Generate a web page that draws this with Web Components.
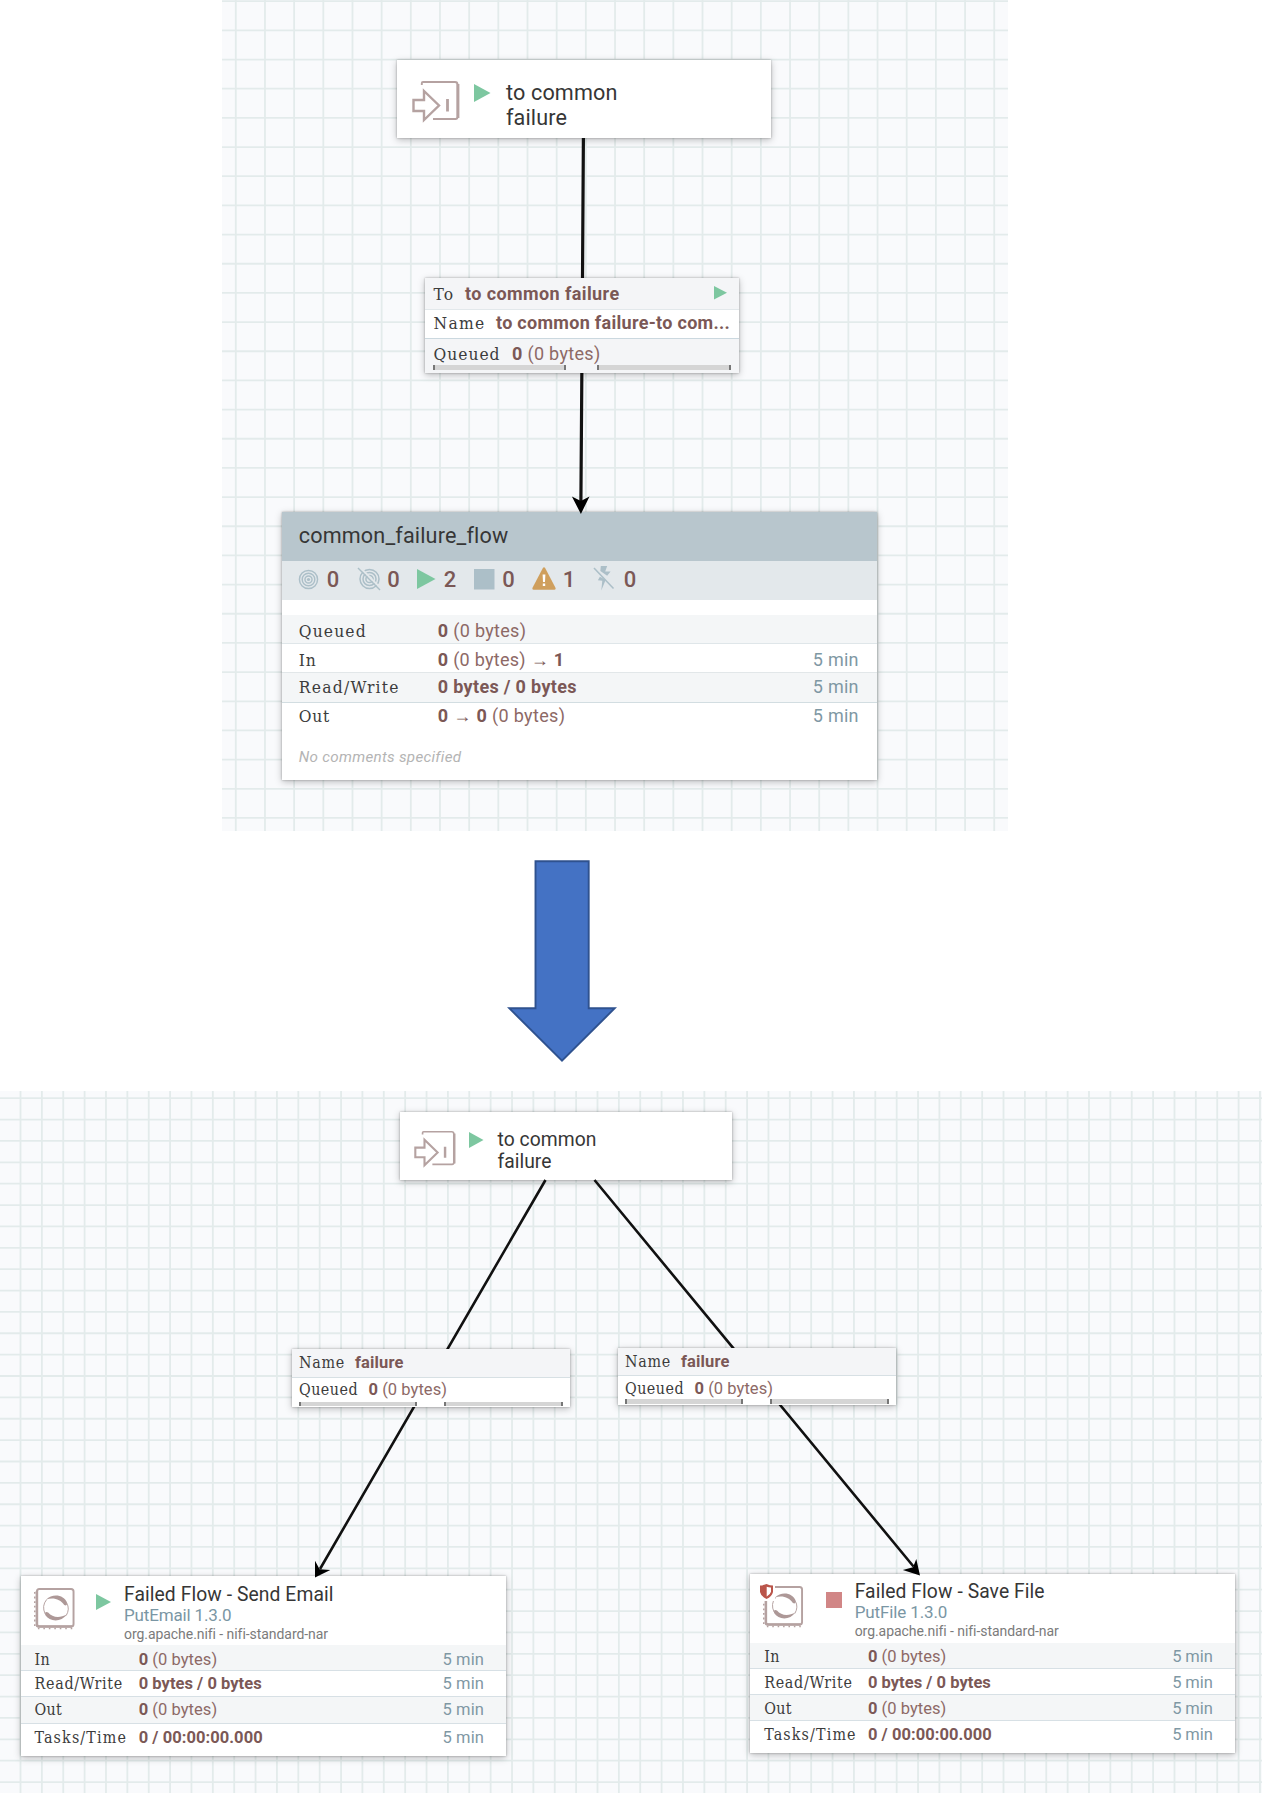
<!DOCTYPE html>
<html lang="en">
<head>
<meta charset="utf-8">
<title>NiFi flow</title>
<style>
html,body{margin:0;padding:0;background:#fff}
body{width:1262px;height:1793px;overflow:hidden;font-family:Roboto,sans-serif}
</style>
</head>
<body>
<flow-page></flow-page>
<script>
const define = (name, css, render) => customElements.define(name, class extends HTMLElement {
  connectedCallback() {
    if (this.shadowRoot) return;
    this.attachShadow({mode: 'open'}).innerHTML = `<style>${css}</style>${render(this)}`;
  }
});

/* Text run whose tracking is adjusted to fill the width given in "w". */
customElements.define('flow-text', class extends HTMLElement {
  connectedCallback() {
    if (this.shadowRoot) return;
    this.attachShadow({mode: 'open'}).innerHTML = '<style>:host{display:block;white-space:nowrap;line-height:1}span{display:inline-block}</style><span><slot></slot></span>';
    const w = +this.getAttribute('w');
    if (!w) return;
    const span = this.shadowRoot.querySelector('span');
    const natural = span.getBoundingClientRect().width;
    span.style.letterSpacing = (w - natural) / this.textContent.length + 'px';
  }
});

const PLAY = '<path d="M0 0L18 9.5L0 19Z" fill="#7dc7a0"/>';
const icons = {
  play: ['0 0 18 19', PLAY],
  stop: ['0 0 20 20', '<path d="M0 0H20V20H0Z" fill="#d18686"/>'],
  stopped: ['0 0 20 20', '<path d="M0 0H20V20H0Z" fill="#acbfc8"/>'],
  port: ['0 0 48 42', `<g fill="none" stroke="#b5a2a1">
    <path d="M9.8 5V3.200Q9.800 2 11 2H43Q45.500 2 45.500 4.500V37Q45.500 39 43.500 39H21" stroke-width="1.900"/>
    <path d="M46 4V38" stroke-width="2.800"/>
    <path d="M1.500 20H12V11L27 25.500L12 40V31H1.500Z" stroke-width="2.400"/>
    <path d="M35.500 19V31.500" stroke-width="2.800"/></g>`],
  processor: ['0 0 42 42', `<g fill="none" stroke="#b5a2a1">
    <rect x="3" y="2" width="37.500" height="37.500" rx="2.500" stroke-width="2"/>
    <path d="M3 4V37.500Q3 39.500 5 39.500H39" stroke-width="2.600"/>
    <path d="M.8 5V41" stroke-width="1.600" stroke-dasharray="1.800 2.800"/>
    <path d="M4 41.500H40" stroke-width="1.600" stroke-dasharray="1.600 4"/></g>
    <g fill="#ad9897"><path d="M12.500 12.500C19 6 31 7.500 34 16Q34 19.500 31 18C27 12 19.500 10 12.500 12.500Z"/>
    <path d="M33.500 27.500C28 35.500 16 35 11.500 28Q10.500 24 14.500 25.500C19 31 27 31 33.500 27.500Z"/></g>
    <path d="M13 12.500Q7.500 19 11.500 27M33.500 16Q37 22 33 28.500" fill="none" stroke="#b5a2a1" stroke-width="1"/>`],
  shield: ['0 0 13 15', '<path d="M0 1.500Q3 1.500 6.500 0Q10 1.500 13 1.500V8Q12 12.500 6.500 15Q1 12.500 0 8Z" fill="#ba554a"/><path d="M6.700 2.800Q9 3.500 11 3.400V7.800Q10.200 10.800 6.700 12.600Z" fill="#fff"/>'],
  target: ['0 0 22 22', '<g fill="none" stroke="#acbfc8" stroke-width="1.500"><circle cx="11" cy="11" r="9.500"/><circle cx="11" cy="11" r="6.600"/><circle cx="11" cy="11" r="3.700"/></g><circle cx="11" cy="11" r="1.700" fill="#acbfc8"/>'],
  targetOff: ['0 0 24 24', '<g fill="none" stroke="#acbfc8" stroke-width="1.500"><circle cx="12.500" cy="12" r="9.500"/><circle cx="12.500" cy="12" r="6.500"/><circle cx="12.500" cy="12" r="3.600"/></g><path d="M2.500 0L24 21.500" stroke="#e3e8eb" stroke-width="2"/><path d="M1 1L23 23" stroke="#acbfc8" stroke-width="1.500"/>'],
  warning: ['0 0 24 23', '<path d="M11 .8Q12 -.5 13 .8L23.600 21Q24 22.500 22.500 22.700H1.500Q0 22.500 .4 21Z" fill="#cf9f5d"/><path d="M10.600 7.500H13.400L13 15H11ZM10.800 16.500H13.200V19H10.800Z" fill="#fff"/>'],
  flashOff: ['0 0 22 25', '<g fill="#acbfc8"><path d="M8 0H14.500L12.500 5.500H18L14.500 10L7.500 5ZM7 11L13 14L8.500 25L9.500 15L5 14.500Z"/></g><path d="M1 2L21 23" stroke="#acbfc8" stroke-width="1.600"/>']
};
define('flow-icon', ':host{display:block;flex:none}svg{display:block;width:100%;height:100%;overflow:visible}', el => {
  const [box, art] = icons[el.getAttribute('name')];
  return `<svg viewBox="${box}" preserveAspectRatio="none">${art}</svg>`;
});
const icon = (name, w, h, x = 0, y = 0) => `<flow-icon name="${name}" style="width:${w}px;height:${h}px;margin:${y}px 0 0 ${x}px"></flow-icon>`;

/* A line of text cells sharing one baseline, set by --b from the row's top. */
define('flow-row', `:host{display:flex;align-items:baseline;box-sizing:border-box;height:var(--h)}
  :host::before{content:"";width:0;height:var(--b);flex:none}`, () => '<slot></slot>');
const row = (h, b, cells, style = '') => `<flow-row style="--h:${h}px;--b:${b}px;${style}">${cells}</flow-row>`;
const cell = (cls, gap, w, text, style = '') => `<flow-text class="${cls}" w="${w}" style="margin-left:${gap}px;${style}">${text}</flow-text>`;
const col = (cls, x, colW, w, text) => `<div style="width:${colW}px;padding-left:${x}px;flex:none">${cell(cls, 0, w, text)}</div>`;
const minutes = w => `<flow-text class="time end" w="${w}">5 min</flow-text>`;

const card = `:host{position:absolute;box-sizing:border-box;background:#fff;display:flex;flex-direction:column;
    box-shadow:0 0 2px rgba(0,0,0,.3),0 2px 7px rgba(0,0,0,.25)}
  .label{font-family:"Roboto Slab","DejaVu Serif Condensed","DejaVu Serif",serif;font-stretch:condensed;font-size:var(--label);color:#3c3c3c}
  .value{font-size:var(--text);color:#8d6966}
  .value b,.strong{font-weight:700;color:#7b5856}
  .strong{font-size:var(--text)}
  .time{font-size:var(--text);color:#7f98a4}
  .end{margin-left:auto;padding-right:var(--end)}
  .title{font-size:var(--title);color:#363636}`;

define('flow-port', card + ':host{flex-direction:row;align-items:flex-start}', el => {
  const big = el.hasAttribute('big');
  return big
    ? icon('port', 48, 42, 15, 20) + icon('play', 16.5, 18, 14, 24) +
      `<div style="margin-left:15.500px">${row(40, 40, cell('title', 0, 111.500, 'to common'))}${row(25, 25, cell('title', 0, 61, 'failure'))}</div>`
    : icon('port', 42, 37, 13.500, 18.500) + icon('play', 14.5, 16, 13.500, 20) +
      `<div style="margin-left:14px">${row(34.5, 34.5, cell('title', 0, 99, 'to common'))}${row(22, 22, cell('title', 0, 54, 'failure'))}</div>`;
});

define('flow-gauge', `:host{display:flex;justify-content:space-between}
  i{height:100%;box-sizing:border-box;border:solid #777;border-width:0 2px;background:#d5d5d5}`,
  el => `<i style="width:${el.getAttribute('left')}px"></i><i style="width:${el.getAttribute('right')}px"></i>`);

define('flow-connection', card, el => {
  const kind = el.getAttribute('kind');
  const gray = 'background:#f4f5f7;';
  if (kind === 'main') return row(32, 22, cell('label', 8.5, 21, 'To') + cell('strong', 10.500, 154.500, 'to common failure') + `<div class="end">${icon('play', 13, 13.500)}</div>`, gray + 'border-bottom:1.5px solid #e2e8eb;') +
    row(29, 19, cell('label', 8.5, 52, 'Name') + cell('strong', 10.500, 234, 'to common failure-to com...'), 'border-bottom:1.500px solid #cbd8df;') +
    row(26, 21, cell('label', 8.5, 67, 'Queued') + cell('value', 11.500, 88.500, '<b>0</b> (0 bytes)'), gray) +
    `<div style="${gray}height:8px"><flow-gauge left="133" right="134" style="height:5.500px;margin:0 8px"></flow-gauge></div>`;
  const second = kind === 'right';
  return row(second ? 27.5 : 28.5, 19, cell('label', 7.5, 46, 'Name') + cell('strong', 10, 48.500, 'failure'), gray + 'border-bottom:1.5px solid #d7e0e4;') +
    row(second ? 23.5 : 24, second ? 18.5 : 17, cell('label', 7.5, 59, 'Queued') + cell('value', 10.5, 78.500, '<b>0</b> (0 bytes)')) +
    `<flow-gauge left="118" right="119" style="height:4.500px;margin:0 7px"></flow-gauge>`;
});

define('flow-group', card + `.status{display:flex;align-items:flex-start;background:#e3e8eb;height:39px;box-sizing:border-box}
  .count{font-size:22px;font-weight:500;color:#7b5856}`, () => {
  const stat = (name, w, h, y, x, gap, tw, n) => icon(name, w, h, x, y) + row(39, 26.5, cell('count', gap, tw, n));
  const min = minutes(46);
  const gray = 'background:#f4f6f7;';
  return row(49, 31.5, cell('title', 16.5, 209, 'common_failure_flow'), 'background:#b8c6cd;') +
    `<div class="status">${stat('target', 21, 21, 8.500, 15.500, 8, 13, '0')}${stat('targetOff', 24, 24, 6, 17, 6.500, 13, '0')}${stat('play', 18.5, 20, 8.500, 17, 8, 13, '2')}${stat('stopped', 20.5, 20.5, 8, 17.5, 7.500, 13, '0')}${stat('warning', 24, 23, 6.500, 16.5, 7, 13, '1')}${stat('flashOff', 21.5, 24.5, 5.500, 17.500, 9, 13, '0')}</div>
    <div style="height:15px"></div>` +
    row(29, 22.5, col('label', 16.5, 139, 68, 'Queued') + cell('value', 0, 88.500, '<b>0</b> (0 bytes)'), gray + 'border-bottom:1.500px solid #dfe6e9;') +
    row(29.5, 22, col('label', 16.5, 139, 18, 'In') + cell('value', 0, 126.500, '<b>0</b> (0 bytes) <b>→ 1</b>') + min, 'border-bottom:1.5px solid #e2e7e9;') +
    row(29.5, 19.5, col('label', 16.5, 139, 101, 'Read/Write') + cell('strong', 0, 139, '0 bytes / 0 bytes') + min, gray + 'border-bottom:1.500px solid #d2dde1;') +
    row(39, 19.5, col('label', 16.5, 139, 31, 'Out') + cell('value', 0, 127.5, '<b>0 → 0</b> (0 bytes)') + min) +
    row(30, 20, cell('', 16.5, 162, 'No comments specified', 'font-size:15.200px;font-style:italic;color:#b4b4b4'));
});

define('flow-processor', card + `.head{display:flex;align-items:flex-start;flex:none}.type{font-size:17px;color:#7a96a4}.bundle{font-size:14px;color:#7b7b7b}
  .badge{position:relative}.badge .shield{position:absolute;left:10.500px;top:10px;padding:0 2px 2px 0;background:#fff}`, el => {
  const save = el.hasAttribute('save');
  const min = minutes(save ? 40.5 : 41.5);
  const rows = save ? [[26, 19.5], [26, 19.5], [26.5, 19.5], [32, 18.5]] : [[25.5, 19.5], [26, 18.5], [27.5, 18.5], [32, 18.5]];
  const x = save ? 14.5 : 14, c = 118.2;
  const data = [['In', 15.5, '<b>0</b> (0 bytes)', 78.5], ['Read/Write', 88.5, '<b>0 bytes / 0 bytes</b>', 123], ['Out', 27.5, '<b>0</b> (0 bytes)', 78.5], ['Tasks/Time', 92.5, '<b>0 / 00:00:00.000</b>', 124]];
  const mark = save
    ? `<div class="badge">${icon('processor', 40.5, 42, 13, 11.5)}<div class="shield">${icon('shield', 13, 15)}</div></div>` + icon('stop', 16, 16, 22.500, 18)
    : icon('processor', 41, 42, 13.500, 10.500) + icon('play', 15, 16, 21, 17.500);
  return `<div class="head" style="height:69px">${mark}<div style="margin-left:13px">` +
    row(25, 24.5, cell('title', 0, save ? 190 : 209.500, save ? 'Failed Flow - Save File' : 'Failed Flow - Send Email')) +
    row(20, 19.5, cell('type', 0, save ? 92.500 : 107.500, save ? 'PutFile 1.3.0' : 'PutEmail 1.3.0')) +
    row(20, 17.5, cell('bundle', 0, 203, 'org.apache.nifi - nifi-standard-nar')) + '</div></div>' +
    data.map((d, i) => row(...rows[i], col('label', x, c - x, d[1], d[0]) + cell('value', 0, d[3], d[2]) + min,
      (i % 2 ? '' : 'background:#f4f6f7;') + (i < 3 ? 'border-bottom:1.500px solid #d7e0e5;' : ''))).join('');
});

/* Canvas with a ruled background, free-placed nodes in the slot and edges between them. */
define('flow-canvas', `:host{display:block;position:relative;overflow:hidden;background:#f9fafc}
  svg{position:absolute;inset:0;width:100%;height:100%}`, el => {
  const [x0, y0, step, w, h] = el.getAttribute('grid').split(' ').map(Number);
  let d = '';
  for (let x = x0; x < w; x += step) d += `M${x.toFixed(2)} 0V${h}`;
  for (let y = y0; y < h; y += step) d += `M0 ${y.toFixed(2)}H${w}`;
  return `<svg><path d="${d}" stroke="#e3ebeb" stroke-width="1.800" fill="none"/></svg><slot></slot>`;
});
define('flow-edges', ':host{display:block;position:absolute;inset:0}svg{display:block;width:100%;height:100%}', el =>
  `<svg><path d="${el.getAttribute('lines')}" stroke="#111" stroke-width="${el.getAttribute('weight')}" fill="none"/><path d="${el.getAttribute('heads')}" fill="#000"/></svg>`);

define('down-arrow', ':host{display:block;width:110px;height:203px}svg{display:block}', () =>
  '<svg width="110" height="203"><path d="M28.500 1.200H81.700V148.200H107.800L55 200.700L2.200 148.200H28.500Z" fill="#4472c4" stroke="#2f528f" stroke-width="1.900"/></svg>');

define('flow-page', `:host{display:flex;flex-direction:column;width:1262px;height:1793px}
  .top{margin-left:222px;width:786px;height:831px;--title:21.600px;--text:18px;--label:17.300px;--end:11.500px}
  .mid{height:260px;padding:29px 0 0 507px;box-sizing:border-box}
  .bottom{width:1262px;height:702px;--title:19.300px;--text:16.500px;--label:15.900px;--end:22px}`, () => {
  const at = (x, y, w, h) => `left:${x}px;top:${y}px;width:${w}px;height:${h}px`;
  return `<flow-canvas class="top" grid="13.800 1.200 29.170 786 831">
    <flow-port big style="${at(175, 60, 374, 78)}"></flow-port>
    <flow-edges weight="3.200" lines="M361.400 138L360.200 325L358.900 502" heads="M349.900 496.500L358.900 501L367.500 496.500L358.900 514Z" style="z-index:1"></flow-edges>
    <flow-connection kind="main" style="${at(203, 277.5, 313.500, 95)};z-index:2"></flow-connection>
    <flow-group style="${at(60.3, 511.5, 595, 268.500)};--end:18.500px"></flow-group>
  </flow-canvas>
  <div class="mid"><down-arrow></down-arrow></div>
  <flow-canvas class="bottom" grid="20.500 7.200 21.370 1262 702">
    <flow-port style="${at(400, 20.500, 332, 68.500)}"></flow-port>
    <flow-connection kind="left" style="${at(291.5, 258, 278, 58)};z-index:2"></flow-connection>
    <flow-connection kind="right" style="${at(617.5, 257, 278, 57)};z-index:2"></flow-connection>
    <flow-processor style="${at(20.5, 485, 485.500, 180)}"></flow-processor>
    <flow-processor save style="${at(749.7, 482.500, 485, 179.500)}"></flow-processor>
    <flow-edges weight="2.600" lines="M545.500 89L320 478M594.500 89L913.500 475.500" heads="M315 486.500L315 469.800L319.600 478.300L330.300 479ZM920 484.500L902.800 479L913 476.300L916.300 468Z" style="z-index:1"></flow-edges>
  </flow-canvas>`;
});
</script>
</body>
</html>
